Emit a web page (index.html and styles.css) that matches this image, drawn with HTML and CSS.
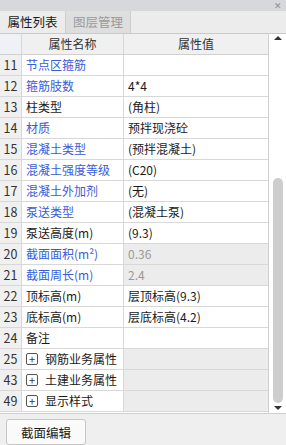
FILE: index.html
```html
<!DOCTYPE html>
<html lang="zh-CN">
<head>
  <meta charset="UTF-8">
  <title>属性列表</title>
  <link rel="stylesheet" href="styles.css">
</head>
<body>
  <div class="titlebar"><span class="close">✕</span></div>
  <div class="tabs">
    <div class="tab active">属性列表</div>
    <div class="tab">图层管理</div>
  </div>

  <div class="panel">
    <div class="table">
      <div class="row head">
        <div class="num"></div>
        <div class="name">属性名称</div>
        <div class="val">属性值</div>
      </div>
      <div class="row"><div class="num">11</div><div class="name blue">节点区箍筋</div><div class="val"></div></div>
      <div class="row"><div class="num">12</div><div class="name blue">箍筋肢数</div><div class="val">4*4</div></div>
      <div class="row"><div class="num">13</div><div class="name">柱类型</div><div class="val">(角柱)</div></div>
      <div class="row"><div class="num">14</div><div class="name blue">材质</div><div class="val">预拌现浇砼</div></div>
      <div class="row"><div class="num">15</div><div class="name blue">混凝土类型</div><div class="val">(预拌混凝土)</div></div>
      <div class="row"><div class="num">16</div><div class="name blue">混凝土强度等级</div><div class="val">(C20)</div></div>
      <div class="row"><div class="num">17</div><div class="name blue">混凝土外加剂</div><div class="val">(无)</div></div>
      <div class="row"><div class="num">18</div><div class="name blue">泵送类型</div><div class="val">(混凝土泵)</div></div>
      <div class="row"><div class="num">19</div><div class="name">泵送高度(m)</div><div class="val">(9.3)</div></div>
      <div class="row"><div class="num">20</div><div class="name blue">截面面积(m²)</div><div class="val ro">0.36</div></div>
      <div class="row"><div class="num">21</div><div class="name blue">截面周长(m)</div><div class="val ro">2.4</div></div>
      <div class="row"><div class="num">22</div><div class="name">顶标高(m)</div><div class="val">层顶标高(9.3)</div></div>
      <div class="row"><div class="num">23</div><div class="name">底标高(m)</div><div class="val">层底标高(4.2)</div></div>
      <div class="row"><div class="num">24</div><div class="name">备注</div><div class="val"></div></div>
      <div class="row group"><div class="num">25</div><div class="name"><span class="plus">+</span>钢筋业务属性</div><div class="val"></div></div>
      <div class="row group"><div class="num">43</div><div class="name"><span class="plus">+</span>土建业务属性</div><div class="val"></div></div>
      <div class="row group"><div class="num">49</div><div class="name"><span class="plus">+</span>显示样式</div><div class="val"></div></div>
    </div>
    <div class="scrollbar">
      <div class="arrow up"></div>
      <div class="track"><div class="thumb"></div></div>
      <div class="arrow down"></div>
    </div>
  </div>

  <div class="footer">
    <button class="btn">截面编辑</button>
  </div>
</body>
</html>
```

FILE: styles.css
```css
body {
  margin: 0;
  width: 286px;
  height: 445px;
  background: #efefef;
  font-family: "Noto Sans CJK SC", "Noto Sans", sans-serif;
  font-size: 12px;
  color: #1a1a1a;
  overflow: hidden;
}

.titlebar {
  height: 11px;
  background: #d7d8dc;
  display: flex;
  justify-content: flex-end;
  align-items: center;
  padding-right: 4px;
}

.close {
  font-size: 9px;
  line-height: 9px;
  color: #8c8c8c;
}

.tabs {
  height: 22px;
  display: flex;
  background: #ececec;
  border-bottom: 1px solid #c9c9c9;
}

.tab {
  width: 64px;
  line-height: 22px;
  text-align: center;
  font-size: 12.5px;
  color: #9a9a9a;
  background: #dedede;
  border-right: 1px solid #cfcfcf;
}

.tab.active {
  width: 65px;
  color: #1a1a1a;
  background: #ececec;
}

.panel {
  display: flex;
  height: 379px;
  border-bottom: 1px solid #cfcfcf;
}

.table {
  width: 268px;
  background: #fff;
}

.row {
  display: grid;
  grid-template-columns: 22px 102px 1fr;
  height: 20px;
  border-bottom: 1px solid #d8d8d8;
  line-height: 20px;
}

.row > div {
  white-space: nowrap;
  overflow: hidden;
}

.num {
  background: #f0f0f0;
  color: #333;
  font-size: 12.5px;
  text-align: center;
  border-right: 1px solid #d8d8d8;
}

.name {
  padding-left: 4px;
  border-right: 1px solid #d8d8d8;
  display: flex;
  align-items: center;
}

.val {
  padding-left: 4px;
}

.head {
  background: #f0f0f0;
  color: #333;
  border-bottom: 1px solid #d0d0d0;
}

.head .num {
  background: #eef1f5;
}

.head .name,
.head .val {
  justify-content: center;
  text-align: center;
  padding-left: 0;
}

.blue {
  color: #3a5bd9;
}

.ro {
  background: #ececec;
  color: #9a9a9a;
}

.group .val {
  background: #ececec;
}

.plus {
  width: 10px;
  height: 10px;
  border: 1px solid #555;
  border-radius: 2px;
  font-size: 11px;
  line-height: 10px;
  text-align: center;
  color: #333;
  margin-right: 7px;
}

.scrollbar {
  width: 17px;
  background: #fff;
  border-left: 1px solid #d0d0d0;
  display: flex;
  flex-direction: column;
  align-items: center;
}

.arrow {
  width: 0;
  height: 0;
  border-left: 4px solid transparent;
  border-right: 4px solid transparent;
}

.arrow.up {
  margin-top: 2px;
  border-bottom: 4px solid #333;
}

.arrow.down {
  margin-bottom: 3px;
  border-top: 4px solid #333;
}

.track {
  flex: 1;
  width: 100%;
  display: flex;
  flex-direction: column;
  justify-content: flex-end;
  align-items: center;
  padding-bottom: 3px;
}

.thumb {
  width: 10px;
  height: 225px;
  background: #cdcdcd;
  border-radius: 5px;
}

.footer {
  padding: 5px 6px;
}

.btn {
  width: 80px;
  height: 26px;
  background: #fafafa;
  border: 1px solid #c6c6c6;
  border-radius: 3px;
  font-family: "Noto Sans CJK SC", "Noto Sans", sans-serif;
  font-size: 12.5px;
  color: #1a1a1a;
  padding: 0;
}
```
